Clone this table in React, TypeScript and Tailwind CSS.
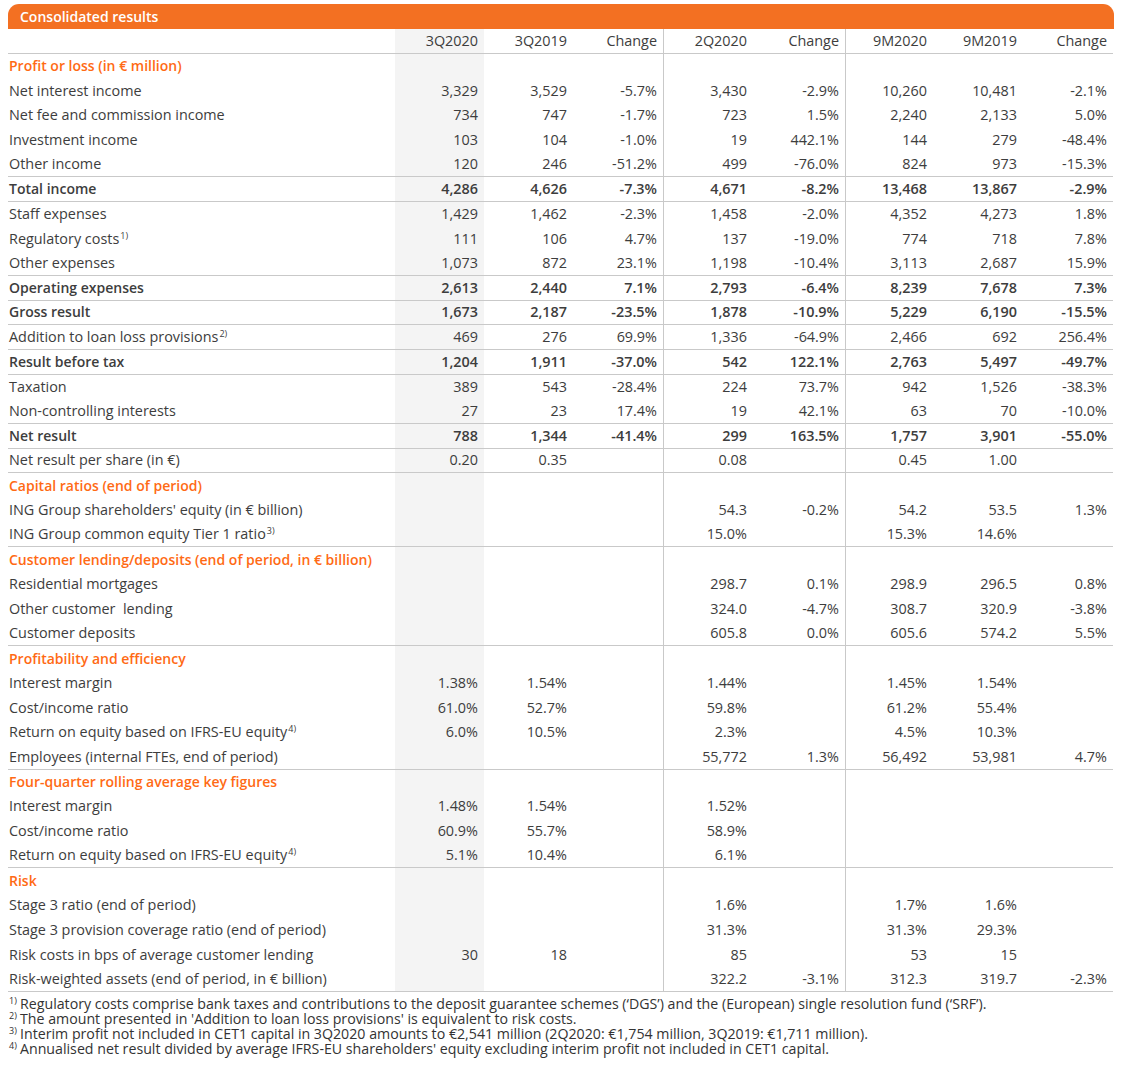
import React from "react";

type Row = {
  label: React.ReactNode;
  vals?: string[];
  title?: boolean;
  bold?: boolean;
  line?: boolean;
};

const Sup = ({ n }: { n: number }) => (
  <span className="relative -top-[5px] ml-[1px] text-[9px] leading-none">{n})</span>
);

const e = "";

const rows: Row[] = [
  { label: "", vals: ["3Q2020", "3Q2019", "Change", "2Q2020", "Change", "9M2020", "9M2019", "Change"], line: true },
  { label: "Profit or loss (in € million)", title: true },
  { label: "Net interest income", vals: ["3,329", "3,529", "-5.7%", "3,430", "-2.9%", "10,260", "10,481", "-2.1%"] },
  { label: "Net fee and commission income", vals: ["734", "747", "-1.7%", "723", "1.5%", "2,240", "2,133", "5.0%"] },
  { label: "Investment income", vals: ["103", "104", "-1.0%", "19", "442.1%", "144", "279", "-48.4%"] },
  { label: "Other income", vals: ["120", "246", "-51.2%", "499", "-76.0%", "824", "973", "-15.3%"], line: true },
  { label: "Total income", vals: ["4,286", "4,626", "-7.3%", "4,671", "-8.2%", "13,468", "13,867", "-2.9%"], bold: true, line: true },
  { label: "Staff expenses", vals: ["1,429", "1,462", "-2.3%", "1,458", "-2.0%", "4,352", "4,273", "1.8%"] },
  { label: <>Regulatory costs<Sup n={1} /></>, vals: ["111", "106", "4.7%", "137", "-19.0%", "774", "718", "7.8%"] },
  { label: "Other expenses", vals: ["1,073", "872", "23.1%", "1,198", "-10.4%", "3,113", "2,687", "15.9%"], line: true },
  { label: "Operating expenses", vals: ["2,613", "2,440", "7.1%", "2,793", "-6.4%", "8,239", "7,678", "7.3%"], bold: true, line: true },
  { label: "Gross result", vals: ["1,673", "2,187", "-23.5%", "1,878", "-10.9%", "5,229", "6,190", "-15.5%"], bold: true, line: true },
  { label: <>Addition to loan loss provisions<Sup n={2} /></>, vals: ["469", "276", "69.9%", "1,336", "-64.9%", "2,466", "692", "256.4%"], line: true },
  { label: "Result before tax", vals: ["1,204", "1,911", "-37.0%", "542", "122.1%", "2,763", "5,497", "-49.7%"], bold: true, line: true },
  { label: "Taxation", vals: ["389", "543", "-28.4%", "224", "73.7%", "942", "1,526", "-38.3%"] },
  { label: "Non-controlling interests", vals: ["27", "23", "17.4%", "19", "42.1%", "63", "70", "-10.0%"], line: true },
  { label: "Net result", vals: ["788", "1,344", "-41.4%", "299", "163.5%", "1,757", "3,901", "-55.0%"], bold: true, line: true },
  { label: "Net result per share (in €)", vals: ["0.20", "0.35", e, "0.08", e, "0.45", "1.00", e], line: true },
  { label: "Capital ratios (end of period)", title: true },
  { label: "ING Group shareholders' equity (in € billion)", vals: [e, e, e, "54.3", "-0.2%", "54.2", "53.5", "1.3%"] },
  { label: <>ING Group common equity Tier 1 ratio<Sup n={3} /></>, vals: [e, e, e, "15.0%", e, "15.3%", "14.6%", e], line: true },
  { label: "Customer lending/deposits (end of period, in € billion)", title: true },
  { label: "Residential mortgages", vals: [e, e, e, "298.7", "0.1%", "298.9", "296.5", "0.8%"] },
  { label: "Other customer\u00a0 lending", vals: [e, e, e, "324.0", "-4.7%", "308.7", "320.9", "-3.8%"] },
  { label: "Customer deposits", vals: [e, e, e, "605.8", "0.0%", "605.6", "574.2", "5.5%"], line: true },
  { label: "Profitability and efficiency", title: true },
  { label: "Interest margin", vals: ["1.38%", "1.54%", e, "1.44%", e, "1.45%", "1.54%", e] },
  { label: "Cost/income ratio", vals: ["61.0%", "52.7%", e, "59.8%", e, "61.2%", "55.4%", e] },
  { label: <>Return on equity based on IFRS-EU equity<Sup n={4} /></>, vals: ["6.0%", "10.5%", e, "2.3%", e, "4.5%", "10.3%", e] },
  { label: "Employees (internal FTEs, end of period)", vals: [e, e, e, "55,772", "1.3%", "56,492", "53,981", "4.7%"], line: true },
  { label: "Four-quarter rolling average key figures", title: true },
  { label: "Interest margin", vals: ["1.48%", "1.54%", e, "1.52%", e, e, e, e] },
  { label: "Cost/income ratio", vals: ["60.9%", "55.7%", e, "58.9%", e, e, e, e] },
  { label: <>Return on equity based on IFRS-EU equity<Sup n={4} /></>, vals: ["5.1%", "10.4%", e, "6.1%", e, e, e, e], line: true },
  { label: "Risk", title: true },
  { label: "Stage 3 ratio (end of period)", vals: [e, e, e, "1.6%", e, "1.7%", "1.6%", e] },
  { label: "Stage 3 provision coverage ratio (end of period)", vals: [e, e, e, "31.3%", e, "31.3%", "29.3%", e] },
  { label: "Risk costs in bps of average customer lending", vals: ["30", "18", e, "85", e, "53", "15", e] },
  { label: "Risk-weighted assets (end of period, in € billion)", vals: [e, e, e, "322.2", "-3.1%", "312.3", "319.7", "-2.3%"], line: true },
];

// per-column cell extras: gray band on 3Q2020, rules before 2Q2020 and 9M2020
const cellCls = [
  "bg-[#f4f4f4] pr-[6px]",
  "pr-[6px]",
  "pr-[6px]",
  "border-l border-[#c9c9c9] pr-[6px]",
  "pr-[6px]",
  "border-l border-[#c9c9c9] pr-[6px]",
  "pr-[6px]",
  "pr-[6px]",
];

const notes = [
  "Regulatory costs comprise bank taxes and contributions to the deposit guarantee schemes (‘DGS’) and the (European) single resolution fund (‘SRF’).",
  "The amount presented in 'Addition to loan loss provisions' is equivalent to risk costs.",
  "Interim profit not included in CET1 capital in 3Q2020 amounts to €2,541 million (2Q2020: €1,754 million, 3Q2019: €1,711 million).",
  "Annualised net result divided by average IFRS-EU shareholders' equity excluding interim profit not included in CET1 capital.",
];

export default function App() {
  return (
    <div className="w-[1122px] h-[1065px] bg-white pt-[4px] px-[8px] font-['Open_Sans',sans-serif] text-[#3d3d3d]">
      <div className="h-[25px] rounded-t-[11px] bg-[#f37022] pl-[12px] flex items-center text-[14px] font-semibold text-white">
        Consolidated results
      </div>

      <div className="w-[1105px]">
        {rows.map((r, i) => (
          <div
            key={i}
            className={`grid grid-cols-[387px_89px_89px_90px_90px_92px_88px_90px_90px] h-[24.7px] text-[14.4px] leading-none ${
              r.line ? "border-b border-[#c9c9c9]" : ""
            } ${r.bold ? "font-semibold" : ""}`}
          >
            <div
              className={`flex items-center pl-[1px] whitespace-nowrap ${
                r.title ? "text-[#ff6a14] font-semibold text-[14px]" : ""
              } ${r.bold ? "text-[14px]" : ""}`}
            >
              <span>{r.label}</span>
            </div>
            {cellCls.map((c, j) => (
              <div key={j} className={`flex items-center justify-end whitespace-nowrap ${c}`}>
                {r.vals ? r.vals[j] : ""}
              </div>
            ))}
          </div>
        ))}
      </div>

      <div className="pt-[4px] text-[14.2px] leading-[15px] text-[#333]">
        {notes.map((n, i) => (
          <div key={i} className="flex items-start whitespace-nowrap pl-[1px]">
            <span className="w-[11px] shrink-0 text-[9px] leading-[9px]">{i + 1})</span>
            <span>{n}</span>
          </div>
        ))}
      </div>
    </div>
  );
}
